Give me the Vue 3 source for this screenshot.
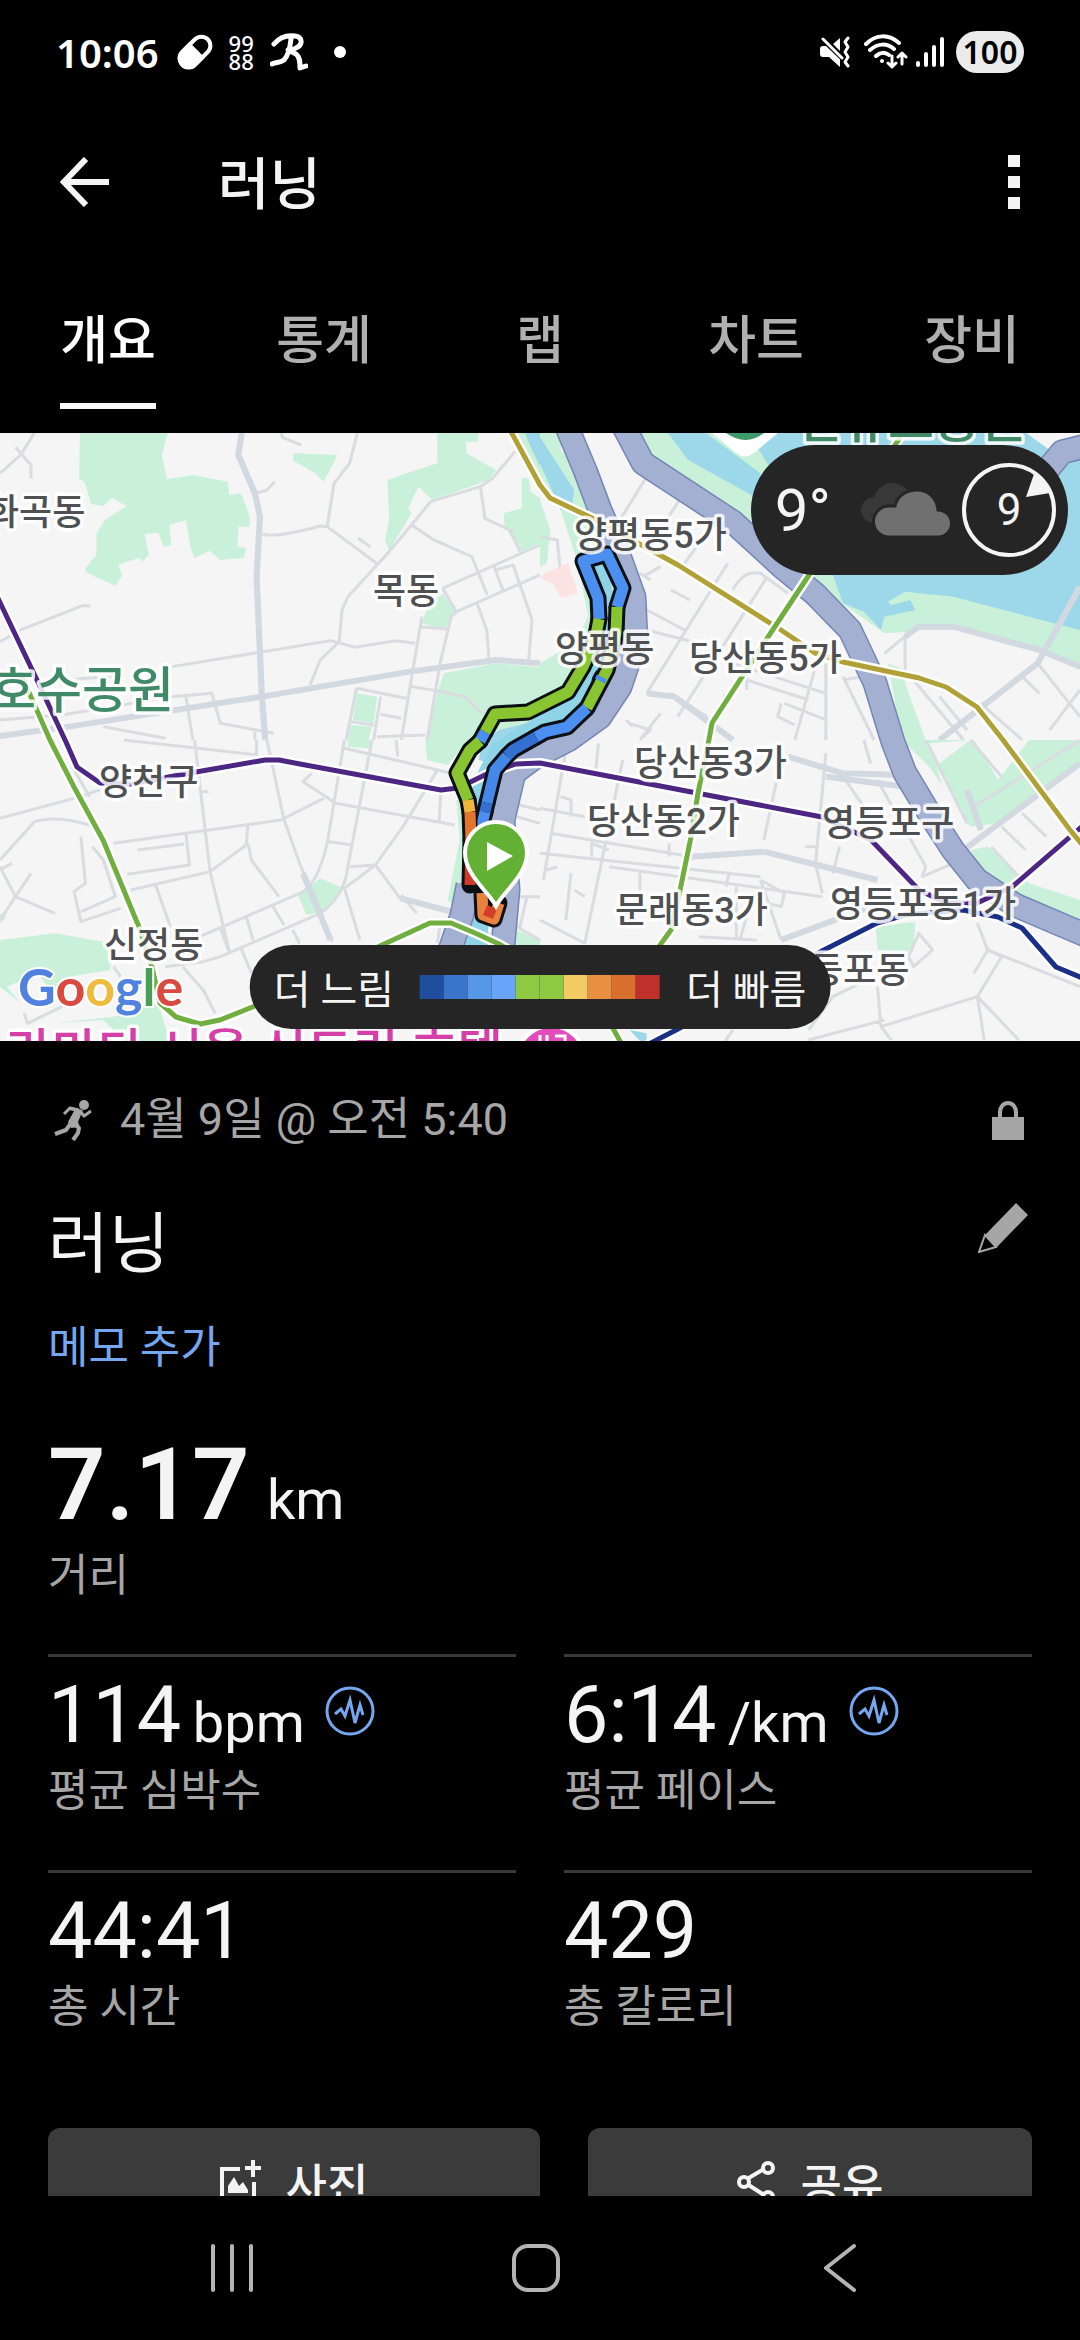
<template>
  <div class="screen">
    <header class="status">
      <span class="status__time">10:06</span>
      <svg class="status__pill" viewBox="0 0 36 36">
        <g transform="rotate(45 18 18)">
          <rect x="9" y="0" width="18" height="36" rx="9" fill="none" stroke="#fff" stroke-width="4" />
          <path d="M9 17h18v10a9 9 0 0 1-18 0z" fill="#fff" stroke="#fff" stroke-width="4" />
        </g>
      </svg>
      <span class="status__app"><span>99</span><span>88</span></span>
      <svg class="status__run" viewBox="0 0 38 38">
        <path
          d="M4 11C9 5 17 2 25 3c8 1 8 9 1 12-3 2-6 2-8 2l8 4c4 3 4 8 4 14l6-2M21 6c-1 9-3 17-7 21-4 3-8 2-12 4"
          fill="none"
          stroke="#fff"
          stroke-width="5"
          stroke-linecap="round"
          stroke-linejoin="round"
        />
      </svg>
      <span class="status__dot"></span>
      <svg class="status__mute" viewBox="0 0 30 32">
        <path d="M3 10h6l11 11v10L9 21H3c-2 0-3-1-3-3v-5c0-2 1-3 3-3zM13 8l7-6v14z" fill="#fff" />
        <path d="M2 2l21 20" stroke="#000" stroke-width="6" />
        <path
          d="M3 3l19 19M28 2l-3 4 3 5-3 5 3 5-3 5 3 4"
          fill="none"
          stroke="#fff"
          stroke-width="3"
          stroke-linecap="round"
          stroke-linejoin="round"
        />
      </svg>
      <svg class="status__wifi" viewBox="0 0 44 36">
        <g fill="none" stroke="#fff" stroke-width="4" stroke-linecap="round" stroke-linejoin="round">
          <path d="M2 10C12 0 25 0 35 9M6 16c8-7 17-7 24-1M12 22c4-4 9-4 13-1" />
          <path d="M28 22v10M24 29l4 4 4-4M38 30V20M34 23l4-4 4 4" stroke-width="3" />
        </g>
        <circle cx="18" cy="27" r="2" fill="#fff" />
      </svg>
      <svg class="status__signal" viewBox="0 0 28 30">
        <path d="M2 26v2M10 17v11M18 10v18M26 2v26" stroke="#fff" stroke-width="4" stroke-linecap="round" />
      </svg>
      <span class="status__battery">100</span>
    </header>

    <div class="app-bar">
      <button class="app-bar__button" aria-label="뒤로">
        <svg width="50" height="50" viewBox="0 0 50 50">
          <path d="M49 25H5M26 2L4 25l22 23" fill="none" stroke="#f4f4f4" stroke-width="6" />
        </svg>
      </button>
      <h1 class="app-bar__title">러닝</h1>
      <button class="app-bar__button" aria-label="더보기">
        <svg width="12" height="54" viewBox="0 0 12 54">
          <path d="M0 0h12v12H0zM0 21h12v12H0zM0 42h12v12H0z" fill="#f4f4f4" />
        </svg>
      </button>
    </div>

    <nav class="tabs">
      <button
        class="tabs__item"
        :class="{ 'tabs__item--selected': activeTab === tab }"
        v-for="tab in tabs"
        :key="tab"
        @click="activeTab = tab"
      >
        <span class="tabs__text">{{ tab }}</span>
      </button>
    </nav>

    <main class="content">
      <section class="map">
        <svg class="map__canvas" viewBox="0 433 1080 608" preserveAspectRatio="xMidYMid slice">
          <rect y="433" width="1080" height="608" fill="#f5f5f6" />
          <g v-for="tile in tiles" :key="tile.id" :transform="tile.transform">
            <path :d="tile.parks" fill="#c9f0d8" />
            <path :d="tile.water" fill="#9dd8ea" />
            <path :d="tile.land" fill="#f5f5f6" />
            <path class="road" :d="tile.roads" />
            <path class="road road--main" :d="tile.mainRoads" />
          </g>
          <path d="M545 573l23-10 10 30-17 5-8-14-13-6z" fill="#fbe3e2" />

          <!-- stream beside the expressway -->
          <path class="stream" d="M474 960l8-50-3-60 0-60 20-40 40-24 40-28 22-40 6-45-8-50" />
          <g class="expressway expressway--edge">
            <path v-for="way in expressways" :key="way" :d="way" />
          </g>
          <g class="expressway">
            <path v-for="way in expressways" :key="way" :d="way" />
          </g>

          <g v-for="line in subway" :key="line.d">
            <path class="subway subway--casing" :d="line.d" />
            <path class="subway" :d="line.d" :stroke="line.color" />
          </g>

          <g class="track track--outline">
            <path v-for="part in track" :key="part.d" :d="part.d" />
          </g>
          <g class="track">
            <path v-for="part in track" :key="part.d" :d="part.d" :stroke="part.color" />
          </g>

          <text
            class="place"
            v-for="place in places"
            :key="place.name + place.x"
            :x="place.x"
            :y="place.y"
          >{{ place.name }}</text>
          <text class="place place--park" x="-10" y="708">호수공원</text>
          <text class="place place--park" x="796" y="438">선유도공원</text>
          <text class="place place--hotel" x="6" y="1070">라마다 서울 신도림 호텔</text>
          <circle cx="551" cy="1060" r="34" fill="#e34cbc" stroke="#fff" stroke-width="4" />
          <path d="M540 1035v8M547 1035v8M555 1036h10v8" fill="none" stroke="#fff" stroke-width="3" />
          <path d="M712 433h66l-24 20q-9 7-18 0z" fill="#fff" />
          <path d="M726 433h38q-18 14-38 0z" fill="#3f9a6c" />

          <text class="google" x="18" y="1006">
            <tspan fill="#5182df">G</tspan><tspan fill="#d94b41">o</tspan><tspan fill="#eebb3c">o</tspan><tspan fill="#5182df">g</tspan><tspan fill="#4a9f56">l</tspan><tspan fill="#d94b41">e</tspan>
          </text>

          <path
            d="M496 906c-7-14-31-31-31-53a31 31 0 0 1 62 0c0 22-24 39-31 53z"
            fill="#62b135"
            stroke="#fff"
            stroke-width="4"
          />
          <path d="M487 842v29l26-15z" fill="#fff" />
        </svg>

        <div class="weather">
          <span class="weather__temp">9°</span>
          <svg class="weather__cloud" width="94" height="54" viewBox="0 0 94 54">
            <path d="M13 39a13 13 0 0 1 5-25C22 4 29 0 36 0c9 0 16 6 18 13l-8 26z" fill="#383838" />
            <path
              d="M34 54a15 15 0 0 1-2-31h7C41 13 50 7 61 7c11 0 20 8 21 20a13 13 0 0 1 0 27z"
              fill="#707070"
              stroke="#252525"
              stroke-width="3"
            />
          </svg>
          <div class="weather__wind">
            <svg class="weather__ring" viewBox="0 0 94 94">
              <circle cx="47" cy="47" r="45" fill="none" stroke="#f4f4f4" stroke-width="4" />
              <path d="M72 11L64 34l24-4q-4-12-16-19z" fill="#f4f4f4" />
            </svg>
            <span>9</span>
          </div>
        </div>

        <div class="legend">
          <span>더 느림</span>
          <div class="legend__scale">
            <i
              class="legend__step"
              v-for="(color, i) in paceColors"
              :key="i"
              :style="{ 'background-color': color }"
            ></i>
          </div>
          <span>더 빠름</span>
        </div>
      </section>

      <section class="details">
        <div class="details__date">
          <svg width="44" height="44" viewBox="0 0 44 44">
            <circle cx="32" cy="7" r="5" fill="#a6a6a6" />
            <path d="M16 9l15 3-5 12 2 5-9 1-3-6 6-11-5-1z" fill="#a6a6a6" />
            <g fill="none" stroke="#a6a6a6" stroke-width="4" stroke-linejoin="round">
              <path d="M27 12l-9-2-6 6M28 13l4 5 7-5" stroke-width="3" />
              <path d="M20 24l7 6-1 5-5 7M19 25l-5 7-11 4" />
            </g>
          </svg>
          <span>4월 9일 @ 오전 5:40</span>
          <svg class="details__lock" width="32" height="40" viewBox="0 0 32 40">
            <path d="M0 17h32v23H0z" fill="#a6a6a6" />
            <path d="M8 18v-6a8 9 0 0 1 16 0v6" fill="none" stroke="#a6a6a6" stroke-width="4" />
          </svg>
        </div>

        <div class="details__heading">
          <h2 class="details__name">러닝</h2>
          <button class="details__edit" aria-label="이름 편집">
            <svg width="50" height="50" viewBox="0 0 50 50">
              <path d="M38 0l12 12-31 32-12-12z" fill="#a6a6a6" />
              <path d="M7 32L1 49l17-5z" fill="none" stroke="#a6a6a6" stroke-width="2" />
            </svg>
          </button>
        </div>

        <a class="details__note" href="#">메모 추가</a>

        <div class="distance">
          <div class="distance__value">7.17 <small class="unit">km</small></div>
          <div class="label">거리</div>
        </div>

        <div class="stats">
          <div class="stat" v-for="stat in stats" :key="stat.label">
            <div class="stat__value">
              <span>{{ stat.value }} <small class="unit" v-if="stat.unit">{{ stat.unit }}</small></span>
              <svg class="stat__pulse" v-if="stat.unit" viewBox="0 0 50 50">
                <circle cx="25" cy="25" r="23" fill="none" stroke="#75a7f0" stroke-width="3" />
                <path
                  d="M10 28l6-5 4 7 5-16 5 23 5-18 3 10"
                  fill="none"
                  stroke="#75a7f0"
                  stroke-width="3"
                />
              </svg>
            </div>
            <div class="label">{{ stat.label }}</div>
          </div>
        </div>

        <div class="actions">
          <button class="actions__button">
            <svg width="42" height="44" viewBox="0 0 42 44">
              <path d="M20 9H2v33h32V22M33 0v17M25 8h16" fill="none" stroke="#f4f4f4" stroke-width="4" />
              <path d="M8 33V26l6-9 5 9 4-4 5 8v3z" fill="#f4f4f4" />
            </svg>
            사진
          </button>
          <button class="actions__button">
            <svg width="40" height="42" viewBox="0 0 40 42">
              <g fill="none" stroke="#f4f4f4" stroke-width="4">
                <path d="M10 18L27 8M10 23l17 11" />
                <circle cx="7" cy="21" r="5" />
                <circle cx="31" cy="7" r="5" />
                <circle cx="31" cy="36" r="5" />
              </g>
            </svg>
            공유
          </button>
        </div>
      </section>
    </main>

    <footer class="nav-bar">
      <button class="nav-bar__button" aria-label="최근 앱">
        <svg width="50" height="50" viewBox="0 0 50 50">
          <path d="M6 3v44M25 3v44M44 3v44" />
        </svg>
      </button>
      <button class="nav-bar__button" aria-label="홈">
        <svg width="50" height="50" viewBox="0 0 50 50">
          <rect x="3" y="3" width="44" height="44" rx="14" />
        </svg>
      </button>
      <button class="nav-bar__button" aria-label="이전">
        <svg width="50" height="50" viewBox="0 0 50 50">
          <path d="M39 3L11 25l28 22" />
        </svg>
      </button>
    </footer>
  </div>
</template>

<script setup>
import { ref } from "vue";

const tabs = ["개요", "통계", "랩", "차트", "장비"];
const activeTab = ref("개요");

const stats = [
  { value: "114", unit: "bpm", label: "평균 심박수" },
  { value: "6:14", unit: "/km", label: "평균 페이스" },
  { value: "44:41", label: "총 시간" },
  { value: "429", label: "총 칼로리" },
];

const paceColors = [
  "#1f4e9e", "#3a74cb", "#5797e8", "#68a5f8", "#8ec944",
  "#8ec944", "#f4cb63", "#e88f42", "#d96f2e", "#c0302b",
];

const places = [
  { name: "화곡동", x: -14, y: 525 },
  { name: "목동", x: 373, y: 604 },
  { name: "양천구", x: 99, y: 795 },
  { name: "신정동", x: 104, y: 958 },
  { name: "양평동5가", x: 574, y: 548 },
  { name: "양평동", x: 555, y: 662 },
  { name: "당산동5가", x: 689, y: 671 },
  { name: "당산동3가", x: 634, y: 776 },
  { name: "당산동2가", x: 587, y: 834 },
  { name: "영등포구", x: 822, y: 836 },
  { name: "문래동3가", x: 615, y: 923 },
  { name: "영등포동1가", x: 830, y: 917 },
  { name: "영등포동", x: 777, y: 983 },
];

// each tile is a quarter of the map with its own 1568x930 grid
const tiles = [
  {
    id: "nw",
    transform: "translate(0 430) scale(.3444 .3333)",
    parks:
      "M232 0H490L470 75 485 148 560 135 662 155 665 195 700 190 725 260V290H692L690 350 715 355 708 383 640 390 608 362 565 385 553 350 540 270 492 285 497 345 475 350 460 308 420 312 432 375 413 395 405 383 342 405 355 435 335 468 248 425V415L280 375V310L305 270 368 228 325 205 300 228 265 222 245 155 230 148zM850 70L980 75 940 155 915 130 852 92zM1270 0H1390L1388 35 1352 35 1355 70 1440 120 1420 150 1255 210 1215 170 1185 235 1195 250 1130 362 1118 330 1130 270 1125 150 1180 130 1270 100zM1515 145H1535L1540 185 1568 205V340L1510 365 1465 285 1462 250 1515 235zM1285 490L1325 545 1290 598 1225 580 1240 535zM1290 730L1440 700 1568 712V930H1240L1270 785zM1035 790L1095 800 1085 880 1025 870zM1018 885L1080 890 1070 930H1010zM1500 0H1568V160z",
    water: "M1520 0H1568V110L1545 60zM1568 870L1450 900 1410 930H1568z",
    land: "",
    roads:
      "M0 635L60 600 240 527H262M0 130L60 75 105 0M45 52L90 105V145M742 190L775 180 798 155M762 312Q800 325 930 288L950 290 1100 405M1040 0L1015 100 970 160 950 290M815 0L820 22 875 45M1495 65L1430 145 1395 170 1250 215 1195 285 1130 365 1010 500 993 540 985 635 930 690 900 765M1195 285L1260 330 1370 380 1415 495M1395 170L1408 265 1480 300 1510 365M1285 475L1568 345M1325 545L1568 435M1285 475L1325 545M1435 410L1460 480M1440 420L1490 405 1545 570 1535 690M1385 520L1413 600 1420 690M500 710L960 632 1030 652 1150 632 1205 640M220 748L360 735M0 870L180 855 500 800 615 790 640 880 795 910M540 800L560 930M1225 560L1220 590 1165 930M1310 560L1280 690 1240 930M1325 545L1310 560M1220 590L1300 598M1195 770L1265 782 1350 800 1400 850M1035 775L1180 805M1035 775L1005 930M1105 800L1085 930M1105 853L1165 865M1020 875L1085 885M1095 920L1235 915M300 890L480 925M740 905V930M1040 325L1075 350",
    mainRoads:
      "M703 0L692 75 740 190 755 260 745 440 760 790 770 930M0 918L200 890 760 800 1190 725 1440 690 1568 700",
  },
  {
    id: "ne",
    transform: "translate(540 430) scale(.3444 .3333)",
    parks:
      "M0 0H70L60 60 100 110 185 270 240 440 260 600 200 780 80 880 0 930V700L100 640 140 560 110 400 60 240 0 150zM270 0H1568V720L1460 670 1180 600 1000 610 850 500 700 370 300 60zM1010 700L1060 720 1120 930H1050zM0 210L30 300 20 400 0 410z",
    water:
      "M0 20L30 70 100 180 90 240 60 240 0 100zM365 0H470L640 130V210L430 90zM600 0H1568V600L1200 500 1060 485 1010 515 1020 525 1075 510 1090 540 1000 560 990 600 940 545 880 520 850 434 700 300 690 150z",
    land: "M1050 640L1100 590 1200 595 1440 670 1568 720V930H1120L1060 760zM1400 0H1568V40L1480 60z",
    roads:
      "M310 140L235 265M405 210L330 330M510 270L420 400M310 600L460 640M380 480L435 510M290 430L320 450M300 440L350 410M545 400L310 790M660 440L400 860M560 480Q590 420 640 430L720 490M310 540L420 600M380 790L485 860M600 750L780 810M600 780L600 740M710 820L830 870M830 700V930M800 710L740 930M880 740L970 930M700 820L690 860 740 885M880 750L940 740M1060 620L1060 720 1230 930M1400 740L1450 790M1280 820L1400 930M1445 700L1568 860M0 320L50 330 60 430M260 880L320 900 290 930M350 850L290 930M540 790L480 930M1160 800L1240 900M560 700L830 790M250 870L270 890M1000 670L1070 610M1568 780L1480 900",
    mainRoads: "M1568 470L1445 700 1160 930M1060 620L1100 590 1200 590 1450 660 1568 710M310 790L390 800 560 930",
  },
  {
    id: "sw",
    transform: "translate(0 740) scale(.3444 .3333)",
    parks:
      "M0 600L160 580 325 610 320 690 200 710 150 760 110 700 20 740 60 790 0 740zM330 830L460 790 500 930H390L300 840 150 850zM930 415L995 445 950 510 890 525 865 465zM1010 0H1080L1070 25 1010 20zM1235 0H1360L1300 75 1240 60zM1325 180H1350L1370 470 1320 500 1300 480 1335 300zM1290 550H1330L1300 620H1280zM1500 570L1568 600V620H1480zM0 520L20 530 0 550z",
    water: "M1400 0H1500L1420 70 1390 60zM1350 560L1400 540 1440 620H1330z",
    land: "",
    roads:
      "M0 235L215 175 290 150M580 155H605M0 360L100 245Q160 225 260 255L300 290M0 380L45 470 160 520M90 400L45 470 0 540M0 390L35 370M235 290L248 430 215 455 235 545 350 505M268 320L300 360 335 470 235 515M330 310L815 240 940 175M400 330L535 312M540 280L550 375 370 403M380 450L610 395 715 315 720 250M565 0L610 395 665 630M720 310L730 360 810 470M450 430L495 560M580 590L870 460Q920 440 950 310L1000 0M590 665L640 650 930 520Q1000 470 1010 380L1080 0M775 0L825 240 870 370 965 605M360 0L750 45M745 0V45M640 565L665 635M715 530L735 600M790 495L825 555M850 570L870 610M700 625L730 700M530 680L590 750 625 820M905 100L880 125 975 190 1320 255M955 305L1025 315M1015 380L1090 375 1165 480 1310 510M1270 90L1170 260 1090 375 1000 445 1045 600M1165 465L1210 520M1000 25L1210 75 1310 100M1280 150L1275 245M1150 0L1155 50M1280 540L1270 610M480 680L590 665M70 820L80 850 180 800M330 680L350 710M1470 185L1568 210M1500 230L1568 250M1500 470H1568M1530 470L1510 560M1500 560L1568 600M210 80L260 170",
    mainRoads: "M1165 475L1310 515M880 400L960 600",
  },
  {
    id: "se",
    transform: "translate(540 740) scale(.3444 .3333)",
    parks:
      "M1050 0H1568V70L1330 250 1250 260 1130 80zM1250 330L1300 320 1420 430 1568 480V560L1380 490 1300 420zM975 560L1090 545 1085 620 1060 640 980 630z",
    water: "M260 870L310 880V903H290z",
    land: "M1130 10L1250 0 1160 70zM1260 0H1420L1330 120zM1150 80L1190 150 1230 240 1190 200z",
    roads:
      "M80 0L10 420M240 60L130 610M0 205L130 230M170 10L160 110M0 340L640 410M30 280L440 350M700 60L650 300M640 420L700 600M830 40L800 370 820 460M200 380L820 470M0 540L130 610M150 350V310L200 330M20 390L50 380M90 400L75 540M100 450L130 470M290 400V460M375 310V350M570 440V600M640 420L710 460 700 500 660 490M550 395L540 440M880 110L1000 290M940 0L960 70M980 120L1120 380M1120 380L1110 410 1200 370M980 740L990 860 1020 900M780 870L850 770 930 730M990 860L1270 770M1300 630L1340 650 1270 770M1270 550L1300 630 1568 740M1260 700L1300 630M1270 770L1390 900M1270 770L1290 900M1100 580L1140 630 1085 680 1070 650zM1310 320L1390 410M1120 0L1240 250M1340 260L1410 330M1400 220L1470 290M1260 200L1568 0M1250 0L1340 110M580 600L620 460M850 400L870 320M460 590L630 600M60 170L90 180V230M560 870L520 930M770 320H800M780 900L1000 840",
    mainRoads: "M720 50L880 100 1050 105M830 110L1060 140M1230 330L1568 70M1240 150L1280 270M650 335L980 420M700 600L960 500M440 350L650 335",
  },
];

const expressways = [
  "M623 425L643 463 733 522 781 566 815 594 850 630 875 683 893 742 905 773 929 813 953 850 977 880 1015 905 1090 937",
  "M566 425L585 470 600 510 616 547 634 597 636 640 620 687 600 717 568 740 537 756 514 773 503 820 508 890 503 945",
  "M468 885L462 915 450 950",
  "M1090 445L1062 452 1035 485",
];

const subway = [
  {
    color: "#4d2583",
    d: "M-5 592L37 680 66 742 77 767 100 783 130 784 196 772 265 760H279L300 764 441 790 458 788 489 773 516 764 540 763 822 817 871 840 919 890 946 903H977L1012 887 1085 824",
  },
  {
    color: "#1c2f86",
    d: "M647 1045L678 1029 822 951 877 923 905 915 936 912 963 910 998 917 1022 928 1056 967 1085 979",
  },
  {
    color: "#b0a035",
    d: "M509 428L540 485 550 498 592 518 678 565 781 630 815 653 843 662 919 678 946 687 977 707 1003 740 1070 830 1085 848",
  },
  {
    color: "#70ae40",
    d: "M20 672L50 740 74 787 103 840 139 927 152 967 160 1003 176 1017 200 1024 220 1020 255 1006 382 945 430 923H451L475 933 499 944 600 1005 625 1050",
  },
  {
    color: "#70ae40",
    d: "M905 430L809 575 764 643 712 723 708 745 698 793 691 837 678 900 671 930 655 952",
  },
];

const track = [
  { color: "#4b8ff0", d: "M599 619L598 598 583 561 607 554 623 588 617 607" },
  { color: "#88c530", d: "M617 607L616 633 607 670 587 708" },
  { color: "#4b8ff0", d: "M587 708L567 727 545 732 536 737" },
  { color: "#3370d2", d: "M536 737L513 750 507 756" },
  { color: "#4589e8", d: "M507 756L495 770 487 803" },
  { color: "#3370d2", d: "M487 803L485 812" },
  { color: "#4b8ff0", d: "M485 812L483 820V845" },
  { color: "#88c530", d: "M599 619L595 640 583 667 568 692 528 712 495 714 485 732" },
  { color: "#4b8ff0", d: "M485 732L480 741" },
  { color: "#88c530", d: "M480 741L470 750 457 773 468 800" },
  { color: "#f2b63c", d: "M468 800L470 812" },
  { color: "#e5752c", d: "M470 812L471 840" },
  { color: "#cf3a2b", d: "M471 840L470 885" },
  { color: "#e8823c", d: "M482 893L483 915 494 919 499 903" },
  { color: "#d2402a", d: "M485 910L495 914" },
  { color: "#4b8ff0", d: "M602 677L600 681" },
];
</script>

<style>
body {
  background: #000;
}
</style>

<style scoped>
.screen {
  display: flex;
  flex-direction: column;
  height: 100vh;
  overflow: hidden;
  background: #000;
  color: #f4f4f4;
  font-family: Roboto, "Noto Sans CJK KR", sans-serif;
}

button {
  padding: 0;
  border: 0;
  background: none;
  color: inherit;
  font-family: inherit;
  cursor: pointer;
}

svg {
  display: block;
  flex-shrink: 0;
}

.status {
  display: flex;
  flex-shrink: 0;
  align-items: center;
  height: 104px;
  padding: 0 56px;
  box-sizing: border-box;
  color: #fff;
  font-family: "Noto Sans", sans-serif;
}

.status__time {
  font-size: 40px;
  font-weight: 600;
}

.status__pill {
  width: 36px;
  height: 36px;
  margin-left: 18px;
  overflow: visible;
}

.status__app {
  display: flex;
  flex-direction: column;
  margin-left: 16px;
  font-size: 22px;
  font-weight: 500;
  line-height: 18px;
}

.status__run {
  width: 38px;
  height: 38px;
  margin-left: 16px;
}

.status__dot {
  width: 12px;
  height: 12px;
  margin-left: 26px;
  border-radius: 50%;
  background: #fff;
}

.status__mute {
  width: 30px;
  height: 32px;
  margin-left: auto;
}

.status__wifi {
  width: 44px;
  height: 36px;
  margin-left: 14px;
}

.status__signal {
  width: 28px;
  height: 30px;
  margin-left: 8px;
}

.status__battery {
  width: 68px;
  height: 42px;
  margin-left: 12px;
  border-radius: 21px;
  background: #ebebeb;
  color: #000;
  font-size: 32px;
  font-weight: 600;
  line-height: 42px;
  text-align: center;
}

.app-bar {
  display: flex;
  flex-shrink: 0;
  align-items: center;
  height: 156px;
  padding: 0 60px;
}

.app-bar__title {
  flex: 1;
  margin: 0 0 0 108px;
  padding-bottom: 6px;
  font-size: 56px;
  font-weight: 500;
}

.tabs {
  display: grid;
  flex-shrink: 0;
  grid-template-columns: repeat(5, 1fr);
  padding-bottom: 24px;
}

.tabs__item {
  color: #b0b0b0;
  font-size: 52px;
  font-weight: 500;
  line-height: 78px;
}

.tabs__text {
  display: inline-block;
  padding: 43px 0 22px;
  border-bottom: 6px solid transparent;
}

.tabs__item--selected {
  color: #fff;
}

.tabs__item--selected .tabs__text {
  border-color: #f8f8f8;
}

.content {
  flex: 1;
  min-height: 0;
  overflow: hidden;
}

.map {
  position: relative;
  aspect-ratio: 1080 / 608;
  overflow: hidden;
}

.map__canvas {
  width: 100%;
  height: 100%;
}

.road {
  fill: none;
  stroke: #d9dce1;
  stroke-width: 9;
  stroke-linejoin: round;
}

.road--main {
  stroke: #d3d9e1;
  stroke-width: 18;
}

.stream {
  fill: none;
  stroke: #8fd3e6;
  stroke-width: 18;
}

.expressway {
  fill: none;
  stroke: #a3b0d1;
  stroke-width: 22;
  stroke-linejoin: round;
}

.expressway--edge {
  stroke: #7486b5;
  stroke-width: 25;
}

.subway {
  fill: none;
  stroke-width: 5;
  stroke-linejoin: round;
}

.subway--casing {
  stroke: #fff;
  stroke-width: 10;
}

.track {
  fill: none;
  stroke-width: 11;
  stroke-linejoin: round;
}

.track--outline {
  stroke: #0c0f14;
  stroke-width: 17;
  stroke-linecap: round;
}

.place {
  fill: #4e5052;
  stroke: #fff;
  stroke-opacity: 0.85;
  stroke-width: 7;
  stroke-linejoin: round;
  paint-order: stroke;
  font-size: 36px;
  font-weight: 500;
}

.place--park {
  fill: #418a68;
  font-size: 50px;
}

.place--hotel {
  fill: #d63fa8;
  font-size: 50px;
}

.google {
  stroke: #fff;
  stroke-width: 4;
  stroke-linejoin: round;
  paint-order: stroke;
  font-family: Lato, sans-serif;
  font-size: 52px;
  font-weight: 700;
}

.weather {
  position: absolute;
  top: 12px;
  right: 12px;
  display: flex;
  align-items: center;
  height: 130px;
  padding: 0 12px 0 24px;
  border-radius: 65px;
  background: #252525;
}

.weather__temp {
  font-size: 60px;
}

.weather__cloud {
  margin: 0 12px 0 25px;
}

.weather__wind {
  position: relative;
  display: flex;
  align-items: center;
  justify-content: center;
  width: 94px;
  height: 94px;
  font-size: 44px;
}

.weather__ring {
  position: absolute;
  inset: 0;
}

.legend {
  position: absolute;
  bottom: 12px;
  left: 50%;
  display: flex;
  align-items: center;
  gap: 26px;
  height: 84px;
  padding: 0 24px;
  border-radius: 42px;
  background: #252525;
  font-size: 40px;
  white-space: nowrap;
  transform: translateX(-50%);
}

.legend__scale {
  display: flex;
}

.legend__step {
  width: 24px;
  height: 24px;
}

.details {
  padding: 51px 48px 0;
  font-size: 44px;
  line-height: 56px;
}

.details__date {
  display: flex;
  align-items: center;
  gap: 24px;
  padding: 0 8px 0 4px;
  color: #a6a6a6;
  font-size: 45px;
}

.details__lock {
  margin-left: auto;
}

.details__heading {
  display: flex;
  align-items: flex-start;
  justify-content: space-between;
  margin-top: 53px;
}

.details__name {
  margin: 0;
  font-size: 66px;
  font-weight: 400;
  line-height: 88px;
}

.details__edit {
  padding: 2px 4px;
}

.details__note {
  display: block;
  width: fit-content;
  margin-top: 31px;
  color: #75a7f0;
  text-decoration: none;
}

.distance {
  margin: 49px 0 50px;
}

.distance__value {
  margin-bottom: 3px;
  font-size: 101px;
  font-weight: 600;
  line-height: 120px;
}

.unit {
  margin-left: -8px;
  font-size: 56px;
  font-weight: 400;
  line-height: 1;
}

.label {
  color: #a6a6a6;
}

.stats {
  display: grid;
  grid-template-columns: 1fr 1fr;
  column-gap: 48px;
}

.stat {
  padding: 14px 0 51px;
  border-top: 3px solid #3a3a3a;
}

.stat__value {
  display: flex;
  align-items: flex-start;
  gap: 20px;
  margin-bottom: 4px;
  font-size: 79px;
  line-height: 88px;
}

.stat__pulse {
  width: 50px;
  height: 50px;
  margin-top: 15px;
}

.actions {
  display: grid;
  grid-template-columns: 41fr 37fr;
  gap: 48px;
  margin-top: 42px;
}

.actions__button {
  display: flex;
  align-items: center;
  justify-content: center;
  gap: 24px;
  height: 108px;
  border-radius: 12px;
  background: #3b3b3b;
  font-size: 45px;
  font-weight: 500;
}

.nav-bar {
  display: flex;
  flex-shrink: 0;
  align-items: center;
  justify-content: space-around;
  height: 144px;
  padding: 0 88px 0 80px;
}

.nav-bar svg {
  fill: none;
  stroke: #b4b4b4;
  stroke-width: 4;
  stroke-linecap: round;
  stroke-linejoin: round;
}
</style>
